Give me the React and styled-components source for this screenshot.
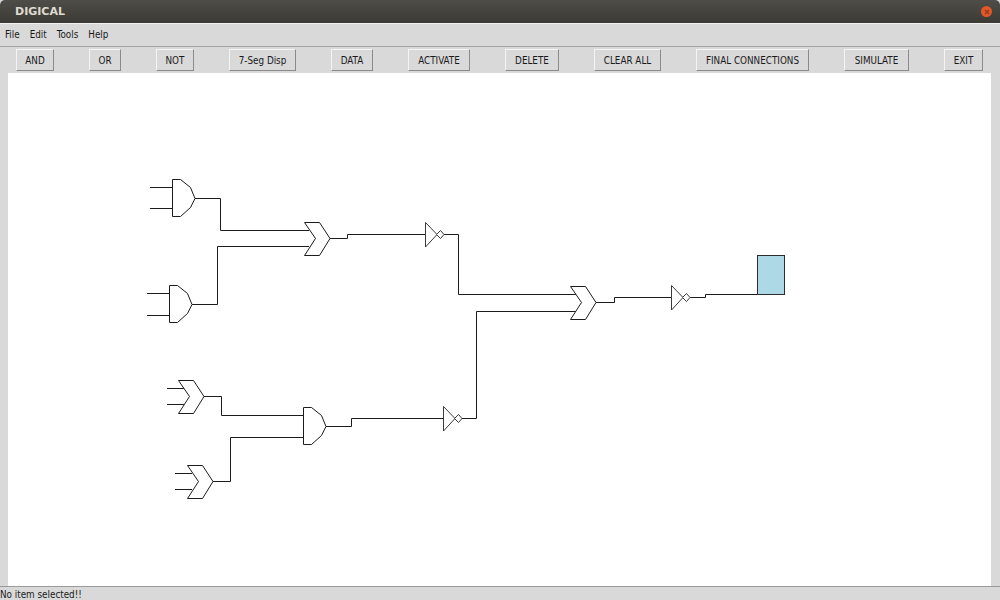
import styled, { createGlobalStyle } from "styled-components";

const BUTTONS = [
  { label: "AND", width: 38 },
  { label: "OR", width: 32 },
  { label: "NOT", width: 38 },
  { label: "7-Seg Disp", width: 67 },
  { label: "DATA", width: 42 },
  { label: "ACTIVATE", width: 62 },
  { label: "DELETE", width: 54 },
  { label: "CLEAR ALL", width: 67 },
  { label: "FINAL CONNECTIONS", width: 113 },
  { label: "SIMULATE", width: 65 },
  { label: "EXIT", width: 39 },
];

const MENUS = ["File", "Edit", "Tools", "Help"];

const WIRES = [
  "150,187.5 173,187.5",
  "150,208.5 173,208.5",
  "195,198.5 220.5,198.5 220.5,230.5 309,230.5",
  "147,293.5 170,293.5",
  "147,315.5 170,315.5",
  "192,304.5 217.5,304.5 217.5,246.5 309,246.5",
  "329,238.5 347.5,238.5 347.5,234.5 425,234.5",
  "444,234.5 458.5,234.5 458.5,294.5 576,294.5",
  "167,388.5 184,388.5",
  "167,404.5 184,404.5",
  "203,396.5 221.5,396.5 221.5,415.5 303,415.5",
  "175,473.5 192,473.5",
  "175,489.5 192,489.5",
  "212,481.5 230.5,481.5 230.5,437.5 303,437.5",
  "326,426.5 351.5,426.5 351.5,418.5 443,418.5",
  "461,418.5 476.5,418.5 476.5,311.5 576,311.5",
  "596,302.5 614.5,302.5 614.5,297.5 672,297.5",
  "690,297.5 705.5,297.5 705.5,294.5 758,294.5",
];

const AND_GATES = [
  [172.5, 179.5],
  [169.5, 285.5],
  [303.5, 407.5],
];
const OR_GATES = [
  [304.5, 222.5],
  [178.5, 380.5],
  [187.5, 465.5],
  [570.5, 286.5],
];
const NOT_GATES = [
  [425.5, 222.5],
  [443.5, 406.5],
  [671.5, 285.5],
];

const AndGate = ({ x, y }) => (
  <polygon
    points={`${x},${y} ${x + 8},${y} ${x + 18},${y + 8} ${x + 22.5},${y + 19} ${x + 18},${y + 28} ${x + 8},${y + 37} ${x},${y + 37}`}
    fill="#fff"
    stroke="#1c1c1c"
  />
);

const OrGate = ({ x, y }) => (
  <polygon
    points={`${x},${y} ${x + 15},${y} ${x + 25.5},${y + 16} ${x + 15},${y + 33} ${x},${y + 33} ${x + 11},${y + 16}`}
    fill="#fff"
    stroke="#1c1c1c"
  />
);

const NotGate = ({ x, y }) => (
  <g fill="#fff" stroke="#3a3a3a">
    <polygon points={`${x},${y} ${x + 11.5},${y + 12} ${x},${y + 24.5}`} />
    <polygon
      points={`${x + 11},${y + 12} ${x + 15},${y + 8} ${x + 18.5},${y + 12} ${x + 15},${y + 16}`}
    />
  </g>
);

const App = () => {
  return (
    <>
      <GlobalStyle />
      <Window>
        <TitleBar>
          <Title>DIGICAL</Title>
          <CloseButton>
            <svg width="6" height="6" viewBox="0 0 6 6">
              <path d="M1 1 L5 5 M5 1 L1 5" stroke="#8c3a18" strokeWidth="1.2" />
            </svg>
          </CloseButton>
        </TitleBar>
        <MenuBar>
          {MENUS.map((item) => (
            <MenuItem key={item}>{item}</MenuItem>
          ))}
        </MenuBar>
        <Toolbar>
          {BUTTONS.map(({ label, width }) => (
            <ToolButton key={label} $width={width}>
              {label}
            </ToolButton>
          ))}
        </Toolbar>
        <CanvasArea>
          <Canvas>
            <svg width="983" height="513" viewBox="8 73 983 513">
              {WIRES.map((points) => (
                <polyline
                  key={points}
                  points={points}
                  fill="none"
                  stroke="#1c1c1c"
                />
              ))}
              {AND_GATES.map(([x, y]) => (
                <AndGate key={`${x}-${y}`} x={x} y={y} />
              ))}
              {OR_GATES.map(([x, y]) => (
                <OrGate key={`${x}-${y}`} x={x} y={y} />
              ))}
              {NOT_GATES.map(([x, y]) => (
                <NotGate key={`${x}-${y}`} x={x} y={y} />
              ))}
              <rect
                x="757.5"
                y="255.5"
                width="27"
                height="39"
                fill="#add8e6"
                stroke="#2c2c2c"
              />
            </svg>
          </Canvas>
        </CanvasArea>
        <StatusBar>No item selected!!</StatusBar>
      </Window>
    </>
  );
};

// Styles

const GlobalStyle = createGlobalStyle`
  html, body {
    margin: 0;
    padding: 0;
    background: #3c3b37;
  }
`;

const Window = styled.div`
  width: 1000px;
  height: 600px;
  display: flex;
  flex-direction: column;
  overflow: hidden;
  background: #d9d9d9;
  font-family: "DejaVu Sans Condensed", "DejaVu Sans", sans-serif;
  font-size: 9.8px;
  color: #1a1a1a;
`;

const TitleBar = styled.div`
  height: 23px;
  flex: none;
  display: flex;
  align-items: center;
  justify-content: space-between;
  padding: 0 8px 0 15px;
  background: linear-gradient(#4f4d47, #3b3a35);
  border-radius: 5px 5px 0 0;
  border-bottom: 1px solid #f2f2f2;
`;

const Title = styled.span`
  font-family: "DejaVu Sans", sans-serif;
  font-weight: 700;
  font-size: 11px;
  color: #dfdbd2;
`;

const CloseButton = styled.span`
  width: 11px;
  height: 11px;
  border-radius: 50%;
  display: flex;
  align-items: center;
  justify-content: center;
  background: #e2572a;
`;

const MenuBar = styled.div`
  height: 22px;
  flex: none;
  display: flex;
  align-items: center;
  gap: 10px;
  padding-left: 5px;
  border-bottom: 1px solid #a3a3a3;
`;

const MenuItem = styled.span`
  line-height: 14px;
`;

const Toolbar = styled.div`
  height: 26px;
  flex: none;
  display: flex;
  align-items: flex-start;
  gap: 35px;
  padding: 2px 0 0 16px;
  box-sizing: border-box;
`;

const ToolButton = styled.button`
  width: ${(p) => p.$width}px;
  height: 22px;
  padding: 0;
  box-sizing: border-box;
  background: #d9d9d9;
  border: 1px solid;
  border-color: #f4f4f4 #8a8a8a #8a8a8a #f4f4f4;
  border-radius: 0;
  font-family: inherit;
  font-size: 9.8px;
  color: #1a1a1a;
`;

const CanvasArea = styled.div`
  flex: 1;
  display: flex;
  padding: 0 9px 0 8px;
  min-height: 0;
`;

const Canvas = styled.div`
  flex: 1;
  background: #fff;
  overflow: hidden;

  svg {
    display: block;
  }
`;

const StatusBar = styled.div`
  height: 14px;
  flex: none;
  box-sizing: border-box;
  padding-top: 1px;
  border-top: 1px solid #9a9a9a;
  line-height: 13px;
`;

export default App;
